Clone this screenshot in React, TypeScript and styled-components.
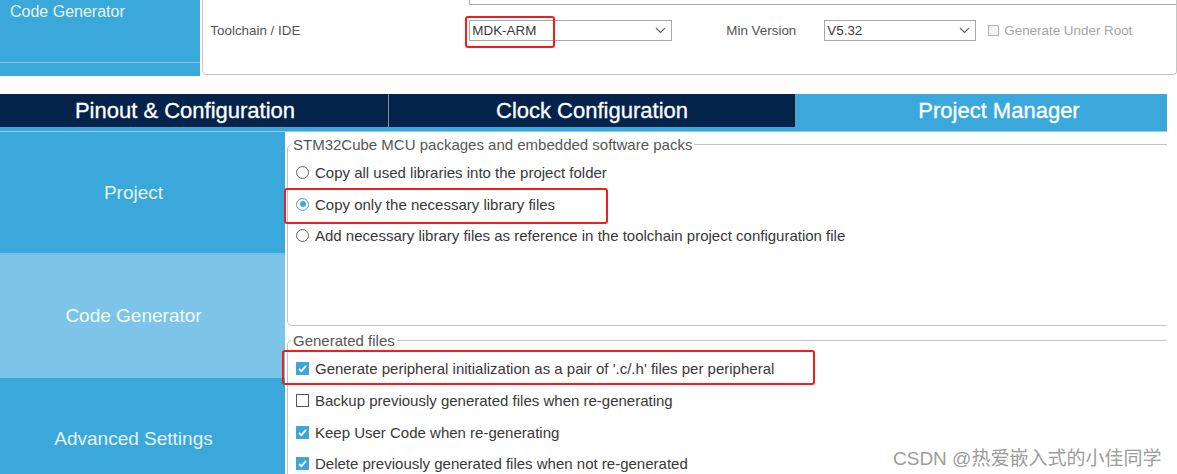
import styled, { createGlobalStyle } from 'styled-components';

const blue = '#3ba8dc';
const navy = '#03234b';

const GlobalStyle = createGlobalStyle`
  html, body {
    margin: 0;
    padding: 0;
    background: #fff;
  }
  body {
    font-family: "Liberation Sans", Arial, sans-serif;
    overflow: hidden;
  }
`;

const Page = styled.div`
  position: relative;
  width: 1177px;
  height: 474px;
  overflow: hidden;
  display: flex;
  flex-direction: column;
  gap: 18px;
`;

// upper crop: the toolchain settings
const TopSection = styled.div`
  display: flex;
  height: 76px;
  flex: none;
`;

const TopSide = styled.div`
  width: 201px;
  background: ${blue};
`;

const TopSideItem = styled.div`
  height: 62px;
  border-bottom: 1px solid #7fc6ea;
  padding-left: 10px;
  font-size: 16px;
  line-height: 24px;
  color: #e8f4fb;
`;

const Panel = styled.div`
  margin-left: 2px;
  width: 969px;
  height: 74px;
  border: 1px solid #c6c6c6;
  border-top: none;
  border-radius: 0 0 4px 5px;
  padding-left: 7px;
  overflow: hidden;
`;

const PanelRows = styled.div`
  display: flex;
  flex-direction: column;
  gap: 15px;
  margin-top: -16px;
`;

const FormRow = styled.div`
  display: flex;
  align-items: center;
  height: 21px;
`;

const FieldLabel = styled.span<{ $w: number; $raised?: boolean }>`
  width: ${p => p.$w}px;
  flex: none;
  font-size: 13.4px;
  color: #555;
  margin-top: ${p => (p.$raised ? '-6px' : '0')};
`;

const TextField = styled.div`
  flex: 1;
  height: 21px;
  box-sizing: border-box;
  border: 1px solid #a9a9a9;
  border-right: none;
  font-size: 13px;
  line-height: 12px;
  padding-left: 3px;
  color: #444;
  white-space: nowrap;
`;

const Select = styled.div<{ $w: number }>`
  position: relative;
  width: ${p => p.$w}px;
  height: 21px;
  box-sizing: border-box;
  flex: none;
  border: 1px solid #a8a8a8;
  display: flex;
  align-items: center;
  justify-content: space-between;
  padding: 0 5px 0 2px;
  font-size: 13.4px;
  color: #3a3a3a;
`;

const Spacer = styled.span<{ $w: number }>`
  width: ${p => p.$w}px;
  flex: none;
`;

const SmallBox = styled.span`
  width: 11px;
  height: 11px;
  box-sizing: border-box;
  border: 1px solid #b4b4b4;
  background: #f4f4f4;
  margin-right: 5px;
  flex: none;
`;

const DisabledText = styled.span`
  font-size: 13.4px;
  color: #a6a6a6;
`;

// red marker drawn over the screenshot
const Highlight = styled.span<{ $l: number; $t: number; $w: number; $h: number }>`
  position: absolute;
  left: ${p => p.$l}px;
  top: ${p => p.$t}px;
  width: ${p => p.$w}px;
  height: ${p => p.$h}px;
  box-sizing: border-box;
  border: 2px solid #f01e1e;
  border-radius: 3px;
  pointer-events: none;
`;

// lower crop: project manager (cut about 18px on the left)
const Main = styled.div`
  width: 1167px;
  flex: 1;
  display: flex;
  flex-direction: column;
  overflow: hidden;
`;

const TabBar = styled.div`
  display: flex;
  height: 33px;
  margin-left: -18px;
  background: ${navy};
  flex: none;
`;

const Tab = styled.div<{ $active?: boolean; $first?: boolean }>`
  width: 406px;
  flex: none;
  display: flex;
  align-items: center;
  justify-content: center;
  font-size: 22px;
  color: #fff;
  -webkit-text-stroke: 0.3px #fff;
  background: ${p => (p.$active ? blue : navy)};
  border-left: ${p => (p.$first ? 'none' : '1px solid #8190a4')};
`;

const TabStrip = styled.div`
  height: 4px;
  background: ${blue};
  border-bottom: 1px solid #8ccfee;
  flex: none;
`;

const Body = styled.div`
  display: flex;
  flex: 1;
`;

const Sidebar = styled.div`
  width: 303px;
  margin-left: -18px;
  flex: none;
  display: flex;
  flex-direction: column;
  background: ${blue};
`;

const SideItem = styled.div<{ $active?: boolean }>`
  height: 121px;
  flex: none;
  display: flex;
  align-items: center;
  justify-content: center;
  font-size: 19px;
  color: ${p => (p.$active ? '#f2f9fd' : '#e4f2fa')};
  background: ${p => (p.$active ? '#7cc5e8' : blue)};
  border-bottom: 2px solid ${p => (p.$active ? '#7cc5e8' : '#70c0e6')};
`;

const Content = styled.div`
  flex: 1;
  padding: 4px 0 0 2px;
  background: #fff;
  display: flex;
  flex-direction: column;
  gap: 6px;
`;

const Group = styled.fieldset<{ $h?: number }>`
  margin: 0;
  width: 900px;
  ${p => (p.$h ? `height: ${p.$h}px;` : '')}
  box-sizing: border-box;
  border: 1px solid #c4c4c4;
  border-radius: 5px;
  padding: 0 0 0 8px;
  flex: none;
`;

const Legend = styled.legend`
  font-size: 15px;
  line-height: 17px;
  color: #555;
  padding: 0 2px;
  margin-left: -5px;
`;

const OptionList = styled.div`
  display: flex;
  flex-direction: column;
  padding-top: 4px;
`;

const Option = styled.div<{ $h: number }>`
  position: relative;
  height: ${p => p.$h}px;
  display: flex;
  align-items: center;
  font-size: 15px;
  color: #383838;
  white-space: nowrap;
`;

const Radio = styled.span<{ $on?: boolean }>`
  position: relative;
  width: 13px;
  height: 13px;
  box-sizing: border-box;
  border-radius: 50%;
  border: 1px solid ${p => (p.$on ? '#4a9fd6' : '#666')};
  background: #fff;
  margin-right: 6px;
  flex: none;
  &::after {
    content: '';
    display: ${p => (p.$on ? 'block' : 'none')};
    position: absolute;
    left: 2.5px;
    top: 2.5px;
    width: 6px;
    height: 6px;
    border-radius: 50%;
    background: #3ea8de;
  }
`;

const Check = styled.span<{ $on?: boolean }>`
  width: 13px;
  height: 13px;
  box-sizing: border-box;
  border: 1px solid ${p => (p.$on ? '#3ea6dc' : '#555')};
  background: ${p => (p.$on ? '#3ea6dc' : '#fff')};
  margin-right: 6px;
  flex: none;
  display: flex;
  align-items: center;
  justify-content: center;
`;

const Watermark = styled.div`
  position: absolute;
  left: 893px;
  top: 443px;
  font-family: "Liberation Sans", Arial, "Noto Sans CJK SC", sans-serif;
  font-size: 19px;
  color: #9c9c9c;
  text-shadow: 0 0 1px #fff, 0 0 2px #fff;
  white-space: nowrap;
`;

const Chevron = () => (
  <svg width="11" height="7" viewBox="0 0 11 7">
    <path d="M1 1 L5.5 5.5 L10 1" fill="none" stroke="#666" strokeWidth="1.2" />
  </svg>
);

const Tick = () => (
  <svg width="11" height="11" viewBox="0 0 11 11">
    <path d="M2 5.8 L4.4 8.2 L9 2.8" fill="none" stroke="#fff" strokeWidth="1.8" />
  </svg>
);

const radios = [
  { label: 'Copy all used libraries into the project folder' },
  { label: 'Copy only the necessary library files', on: true, mark: true },
  { label: 'Add necessary library files as reference in the toolchain project configuration file' },
];

const checks = [
  { label: "Generate peripheral initialization as a pair of '.c/.h' files per peripheral", on: true, mark: true },
  { label: 'Backup previously generated files when re-generating' },
  { label: 'Keep User Code when re-generating', on: true },
  { label: 'Delete previously generated files when not re-generated', on: true },
];

const App = () => {
  return (
    <Page>
      <GlobalStyle />
      <TopSection>
        <TopSide>
          <TopSideItem>Code Generator</TopSideItem>
        </TopSide>
        <Panel>
          <PanelRows>
            <FormRow>
              <FieldLabel $w={259} $raised>Toolchain Folder Location</FieldLabel>
              <TextField>D:\Workspace\STM32\test_demo\MDK-ARM\</TextField>
            </FormRow>
            <FormRow>
              <FieldLabel $w={259}>Toolchain / IDE</FieldLabel>
              <Select $w={203}>
                <span>MDK-ARM</span>
                <Chevron />
                <Highlight $l={-5} $t={-5} $w={90} $h={32} />
              </Select>
              <Spacer $w={54} />
              <FieldLabel $w={98}>Min Version</FieldLabel>
              <Select $w={152}>
                <span>V5.32</span>
                <Chevron />
              </Select>
              <Spacer $w={12} />
              <SmallBox />
              <DisabledText>Generate Under Root</DisabledText>
            </FormRow>
          </PanelRows>
        </Panel>
      </TopSection>

      <Main>
        <TabBar>
          <Tab $first>Pinout &amp; Configuration</Tab>
          <Tab>Clock Configuration</Tab>
          <Tab $active>Project Manager</Tab>
        </TabBar>
        <TabStrip />
        <Body>
          <Sidebar>
            <SideItem>Project</SideItem>
            <SideItem $active>Code Generator</SideItem>
            <SideItem>Advanced Settings</SideItem>
          </Sidebar>
          <Content>
            <Group $h={190}>
              <Legend>STM32Cube MCU packages and embedded software packs</Legend>
              <OptionList>
                {radios.map(r => (
                  <Option key={r.label} $h={31.5}>
                    <Radio $on={r.on} />
                    {r.label}
                    {r.mark && <Highlight $l={-12} $t={-1} $w={324} $h={36} />}
                  </Option>
                ))}
              </OptionList>
            </Group>
            <Group>
              <Legend>Generated files</Legend>
              <OptionList>
                {checks.map(c => (
                  <Option key={c.label} $h={31.7}>
                    <Check $on={c.on}>{c.on && <Tick />}</Check>
                    {c.label}
                    {c.mark && <Highlight $l={-14} $t={-3} $w={533} $h={35} />}
                  </Option>
                ))}
              </OptionList>
            </Group>
          </Content>
        </Body>
      </Main>

      <Watermark>CSDN @热爱嵌入式的小佳同学</Watermark>
    </Page>
  );
};

export default App;
